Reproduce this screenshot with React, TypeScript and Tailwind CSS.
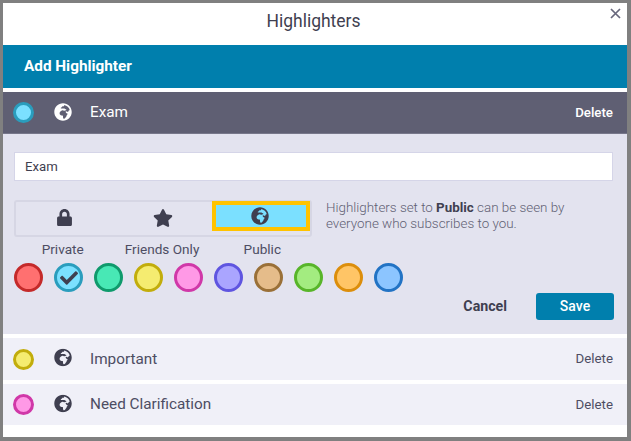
import { FaGlobeAfrica, FaLock, FaStar, FaCheck } from "react-icons/fa";

const swatches = [
  ["bg-[#ff7070]", "border-[#c42a2a]"],
  ["bg-[#7be0ff]", "border-[#2a9dbd]"],
  ["bg-[#48e8b5]", "border-[#0f9a6c]"],
  ["bg-[#f5ec70]", "border-[#c2ad0c]"],
  ["bg-[#ff99e6]", "border-[#d038a8]"],
  ["bg-[#aaa5ff]", "border-[#5f55e0]"],
  ["bg-[#e5bc8a]", "border-[#9a7038]"],
  ["bg-[#a3ec80]", "border-[#58b52a]"],
  ["bg-[#ffc566]", "border-[#dc8e0c]"],
  ["bg-[#8cc5ff]", "border-[#2273c4]"],
];

function Row({ name, fill, border, tall }: { name: string; fill: string; border: string; tall?: boolean }) {
  return (
    <div className={`flex items-center bg-[#f0f0f8] pl-[10px] pr-[14px] text-[#4d4d63] ${tall ? "h-[42px]" : "h-[41px]"}`}>
      <span className={`h-[21px] w-[21px] rounded-full border-[3px] ${fill} ${border}`} />
      <FaGlobeAfrica className="ml-[20px] h-[18px] w-[18px] -translate-y-[1.5px] text-[#3f3f50]" />
      <span className="ml-[18px] text-[15.3px]">{name}</span>
      <span className="ml-auto text-[13.3px]">Delete</span>
    </div>
  );
}

export default function App() {
  return (
    <div className="h-[441px] w-[631px] overflow-hidden bg-[#808080] pb-[4px] pl-[3px] pr-[4px] pt-[3px] font-['Roboto',sans-serif]">
      <div className="relative h-full bg-white">
        <div className="flex h-[36px] items-center justify-center pr-[3px] text-[17.5px] text-[#3f3f50]">Highlighters</div>
        <button className="absolute right-[6px] top-[5px] text-[#67677c]">
          <svg width="11" height="11" viewBox="0 0 11 11" className="block" stroke="currentColor" strokeWidth="1.7" fill="none">
            <path d="M1 1 L10 10 M10 1 L1 10" />
          </svg>
        </button>
        <div className="mt-[6px] flex h-[43px] items-center bg-[#007fad] pl-[21px] text-[15.3px] font-bold text-white">Add Highlighter</div>
        <div className="mt-[4px] flex h-[42px] items-center border-b border-[#77778a] bg-[#5f5f73] pl-[10px] pr-[14px] text-white">
          <span className="h-[21px] w-[21px] rounded-full border-[3px] border-[#2a9dbd] bg-[#7be0ff]" />
          <FaGlobeAfrica className="ml-[20px] h-[18px] w-[18px] -translate-y-[1px]" />
          <span className="ml-[18px] text-[15.3px]">Exam</span>
          <span className="ml-auto text-[13.3px] font-medium">Delete</span>
        </div>
        <div className="h-[200px] bg-[#e3e3ef] px-[11px] pt-[18px]">
          <input
            readOnly
            value="Exam"
            className="block h-[29px] w-[599px] border border-[#d5d5e8] bg-white px-[10px] text-[13.2px] text-[#3f3f50] outline-none"
          />
          <div className="mt-[19px] flex">
            <div className="w-[298px]">
              <div className="flex h-[37px] w-[298px] rounded-[3px] border-2 border-[#d6d6e4] text-[#3f3f50]">
                <div className="flex h-[30px] w-[97px] items-center justify-center">
                  <FaLock className="h-[17px] w-[17px]" />
                </div>
                <div className="flex h-[32px] w-[99px] items-center justify-center">
                  <FaStar className="h-[20px] w-[20px]" />
                </div>
                <div className="-mt-[1px] flex h-[30px] w-[98px] items-center justify-center border-4 border-[#ffc300] bg-[#7be0ff]">
                  <FaGlobeAfrica className="h-[18px] w-[18px] -translate-x-[1px]" />
                </div>
              </div>
              <div className="mt-[4px] flex text-[13.6px] leading-[17px] text-[#4d4d63]">
                <span className="w-[98px] text-center">Private</span>
                <span className="w-[102px] text-center">Friends Only</span>
                <span className="w-[100px] text-center">Public</span>
              </div>
            </div>
            <p className="ml-[14px] w-[270px] text-[13.4px] font-light leading-[16px] text-[#5f5f73]">
              Highlighters set to <b className="font-bold text-[#3f3f50]">Public</b> can be seen by everyone who subscribes to you.
            </p>
          </div>
          <div className="mt-[5px] flex gap-[11px]">
            {swatches.map(([fill, border], i) => (
              <span key={i} className={`flex h-[29px] w-[29px] items-center justify-center rounded-full border-[3px] text-[#3f3f50] ${fill} ${border}`}>
                {i === 1 && <FaCheck className="h-[18px] w-[18px]" />}
              </span>
            ))}
          </div>
          <div className="mt-[1px] flex items-center justify-end">
            <span className="mr-[29px] text-[14.2px] font-bold text-[#3f3f50]">Cancel</span>
            <button className="mr-[2px] h-[27px] w-[78px] rounded-[3px] bg-[#007fad] text-[14px] font-medium text-white">Save</button>
          </div>
        </div>
        <div className="mt-[4px] flex flex-col gap-[4px]">
          <Row tall name="Important" fill="bg-[#f5ec70]" border="border-[#c2ad0c]" />
          <Row name="Need Clarification" fill="bg-[#ff99e6]" border="border-[#d038a8]" />
        </div>
      </div>
    </div>
  );
}
